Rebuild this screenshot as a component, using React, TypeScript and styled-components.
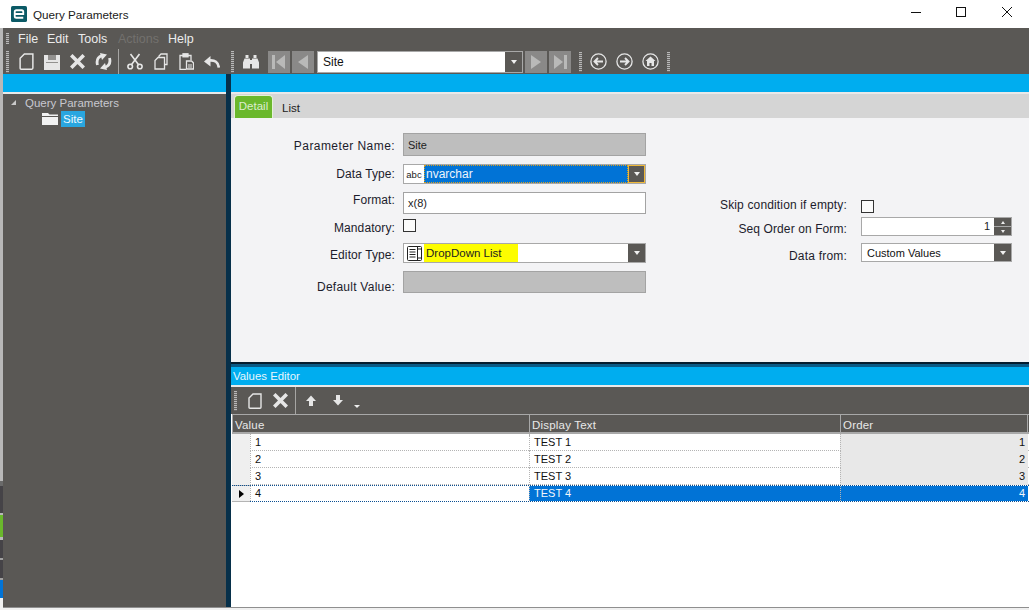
import React from 'react';
import styled, { createGlobalStyle } from 'styled-components';

const FONT = '"Liberation Sans", Arial, sans-serif';

const GlobalStyle = createGlobalStyle`
  html, body {
    margin: 0;
    padding: 0;
    background: #ffffff;
  }
  body {
    font-family: ${FONT};
    font-size: 12px;
    overflow: hidden;
  }
`;

const Page = styled.div`
  width: 1029px;
  height: 610px;
  display: flex;
  overflow: hidden;
`;

const Backdrop = styled.div`
  width: 3px;
  flex: none;
  display: flex;
  flex-direction: column;
`;

const Sliver = styled.div<{ $h: number; $c: string }>`
  height: ${p => p.$h}px;
  background: ${p => p.$c};
`;

const Window = styled.div`
  flex: 1;
  min-width: 0;
  display: flex;
  flex-direction: column;
`;

const TitleBar = styled.div`
  height: 28px;
  flex: none;
  display: flex;
  align-items: center;
  background: #ffffff;
  padding-left: 8px;
`;

const TitleText = styled.span`
  margin-left: 6px;
  font-size: 11.7px;
  color: #1a1a1a;
  flex: 1;
`;

const WindowButton = styled.div<{ $gap: number }>`
  width: 16px;
  height: 16px;
  margin-right: ${p => p.$gap}px;
  color: #111;
`;

const MenuBar = styled.div`
  height: 21px;
  flex: none;
  display: flex;
  align-items: center;
  background: #5a5855;
  padding-left: 3px;
`;

const Grip = styled.div<{ $h: number; $ml?: number }>`
  width: 3px;
  height: ${p => p.$h}px;
  margin-left: ${p => p.$ml ?? 0}px;
  flex: none;
  background: repeating-linear-gradient(to bottom, #b8b8b8 0 1px, #6a6866 1px 2px);
`;

const MenuItem = styled.span<{ $w: number; $off?: boolean }>`
  width: ${p => p.$w}px;
  flex: none;
  font-size: 12.5px;
  color: ${p => (p.$off ? '#73716e' : '#ececec')};
`;

const MenuItems = styled.div`
  display: flex;
  margin-left: 9px;
`;

const Toolbar = styled.div`
  height: 25px;
  flex: none;
  display: flex;
  align-items: center;
  background: #5a5855;
  padding-left: 3px;
  color: #e6e6e6;
`;

const ToolIcon = styled.div<{ $w: number; $ml: number }>`
  width: ${p => p.$w}px;
  height: 18px;
  margin-left: ${p => p.$ml}px;
  flex: none;
  display: flex;
  align-items: center;
  justify-content: center;
  svg {
    display: block;
  }
`;

const ToolSep = styled.div<{ $ml: number; $h: number }>`
  width: 1px;
  height: ${p => p.$h}px;
  margin-left: ${p => p.$ml}px;
  flex: none;
  background: #a6a5a3;
`;

const NavButton = styled.div<{ $ml: number }>`
  width: 22px;
  height: 22px;
  margin-left: ${p => p.$ml}px;
  flex: none;
  background: #8a8988;
  display: flex;
  align-items: center;
  justify-content: center;
  color: #b9b9b8;
`;

const Combo = styled.div<{ $w: number; $ml?: number; $h: number }>`
  width: ${p => p.$w}px;
  height: ${p => p.$h}px;
  margin-left: ${p => p.$ml ?? 0}px;
  flex: none;
  box-sizing: border-box;
  border: 1px solid #a8a8a8;
  background: #ffffff;
  display: flex;
  align-items: stretch;
  color: #111;
`;

const ComboText = styled.div<{ $size?: number; $pad?: number }>`
  flex: 1;
  min-width: 0;
  display: flex;
  align-items: center;
  padding-left: ${p => p.$pad ?? 5}px;
  font-size: ${p => p.$size ?? 12}px;
`;

const ComboArrow = styled.div<{ $w?: number; $focus?: boolean }>`
  width: ${p => p.$w ?? 17}px;
  flex: none;
  box-sizing: border-box;
  background: #5a5855;
  border: ${p => (p.$focus ? '1px solid #f0b93a' : 'none')};
  display: flex;
  align-items: center;
  justify-content: center;
  &::after {
    content: '';
    border-left: 3.5px solid transparent;
    border-right: 3.5px solid transparent;
    border-top: 4px solid #f0f0f0;
  }
`;

const Body = styled.div`
  flex: 1;
  min-height: 0;
  display: flex;
`;

const LeftPane = styled.div`
  width: 223px;
  flex: none;
  display: flex;
  flex-direction: column;
  background: #5a5855;
`;

const BlueBand = styled.div<{ $h: number }>`
  height: ${p => p.$h}px;
  flex: none;
  background: #00adef;
  color: #e6f6fd;
  font-size: 11.4px;
  display: flex;
  align-items: center;
  padding-left: 2px;
`;

const WhiteRule = styled.div<{ $h?: number }>`
  height: ${p => p.$h ?? 2}px;
  flex: none;
  background: #e9e9e9;
`;

const Tree = styled.div`
  padding: 1px 0 0 8px;
  color: #c8c8d0;
  font-size: 11.5px;
`;

const TreeRoot = styled.div`
  display: flex;
  align-items: center;
  height: 15px;
`;

const TreeToggle = styled.span`
  width: 0;
  height: 0;
  border-left: 5px solid transparent;
  border-bottom: 5px solid #c9c9c9;
  margin-right: 9px;
`;

const TreeLeaf = styled.div`
  display: flex;
  align-items: center;
  height: 16px;
  margin-top: 1px;
  padding-left: 31px;
`;

const TreeSelected = styled.span`
  margin-left: 3px;
  width: 24px;
  height: 16px;
  line-height: 16px;
  text-align: center;
  background: #29a6e0;
  color: #eef8fd;
  font-size: 11.5px;
`;

const Splitter = styled.div`
  width: 5px;
  flex: none;
  background: #07304a;
`;

const RightPane = styled.div`
  flex: 1;
  min-width: 0;
  display: flex;
  flex-direction: column;
  background: #ffffff;
`;

const TabBar = styled.div`
  height: 24px;
  flex: none;
  display: flex;
  align-items: flex-end;
  background: #d5d5d5;
  padding-left: 3px;
`;

const TabActive = styled.div`
  width: 39px;
  height: 23px;
  box-sizing: border-box;
  border: 1px solid #e4f2d6;
  border-bottom: none;
  border-radius: 4px 4px 0 0;
  background: #6ab82c;
  color: #dcecce;
  font-size: 11.5px;
  text-align: center;
  line-height: 20px;
`;

const Tab = styled.div`
  margin-left: 9px;
  height: 21px;
  line-height: 23px;
  font-size: 11.5px;
  color: #222;
`;

const FormArea = styled.div`
  height: 244px;
  flex: none;
  box-sizing: border-box;
  background: #f3f3f5;
  display: flex;
  padding-top: 15px;
`;

const FormColumn = styled.div<{ $w: number; $top?: number }>`
  width: ${p => p.$w}px;
  flex: none;
  padding-top: ${p => p.$top ?? 0}px;
`;

const FormRow = styled.div<{ $h: number; $mt?: number; $label: number }>`
  height: ${p => p.$h}px;
  margin-top: ${p => p.$mt ?? 0}px;
  display: grid;
  grid-template-columns: ${p => p.$label}px 1fr;
  column-gap: 8px;
  align-items: center;
`;

const FieldLabel = styled.label<{ $dy?: number; $ls?: number }>`
  text-align: right;
  white-space: nowrap;
  font-size: 12px;
  letter-spacing: ${p => p.$ls ?? 0.1}px;
  color: #1c1c2c;
  transform: translateY(${p => p.$dy ?? 0}px);
`;

const TextBox = styled.div<{ $w: number; $grey?: boolean }>`
  width: ${p => p.$w}px;
  height: 100%;
  box-sizing: border-box;
  border: 1px solid #a3a3a3;
  background: ${p => (p.$grey ? '#bebebe' : '#ffffff')};
  padding-left: 4px;
  display: flex;
  align-items: center;
  font-size: 11px;
  color: #222;
`;

const Check = styled.div<{ $ml?: number }>`
  width: 13px;
  height: 13px;
  margin-left: ${p => p.$ml ?? 0}px;
  box-sizing: border-box;
  border: 1px solid #333;
  background: #fbfbfb;
`;

const SelectedText = styled.div`
  flex: 1;
  background: #0173d6;
  outline: 1px dotted #d8a020;
  outline-offset: -1px;
  color: #eef4fb;
  font-size: 12px;
  display: flex;
  align-items: center;
  padding-left: 2px;
`;

const ComboGlyph = styled.div`
  width: 20px;
  flex: none;
  display: flex;
  align-items: center;
  justify-content: center;
  font-size: 9.5px;
  color: #222;
`;

const Highlight = styled.span`
  background: #fdfd00;
  font-size: 11.5px;
  padding: 3px 17px 3px 2px;
  color: #222;
`;

const Spinner = styled.div`
  width: 17px;
  flex: none;
  display: flex;
  flex-direction: column;
  gap: 1px;
  background: #a8a8a8;
`;

const SpinPart = styled.div<{ $up?: boolean }>`
  flex: 1;
  background: #5a5855;
  display: flex;
  align-items: center;
  justify-content: center;
  &::after {
    content: '';
    border-left: 2.5px solid transparent;
    border-right: 2.5px solid transparent;
    ${p => (p.$up ? 'border-bottom: 3px solid #eee;' : 'border-top: 3px solid #eee;')}
  }
`;

const SpinValue = styled.div`
  flex: 1;
  text-align: right;
  padding-right: 4px;
  font-size: 11px;
  line-height: 17px;
  color: #222;
`;

const PaneDivider = styled.div`
  height: 5px;
  flex: none;
  background: linear-gradient(to bottom, #041c2e 0 2px, #0a5a86 2px 100%);
`;

const GridToolbar = styled(Toolbar)`
  height: 27px;
  padding-left: 3px;
`;

const MoreArrow = styled.div`
  margin: 12px 0 0 11px;
  border-left: 3px solid transparent;
  border-right: 3px solid transparent;
  border-top: 3px solid #eee;
`;

const DataGrid = styled.div`
  flex: 1;
  min-height: 0;
  margin-left: 1px;
  background: #ffffff;
  display: flex;
  flex-direction: column;
`;

const COLUMNS = '18px 279px 311px 188px';

const HeaderRow = styled.div`
  height: 20px;
  flex: none;
  display: grid;
  grid-template-columns: 297px 311px 188px;
  box-sizing: border-box;
  border-top: 1px solid #a8a8a8;
  border-bottom: 2px solid #a8a8a8;
  background: #5a5855;
`;

const HeaderCell = styled.div`
  border-left: 1px solid #a8a8a8;
  padding-left: 2px;
  font-size: 11.5px;
  letter-spacing: 0.2px;
  line-height: 21px;
  color: #e8e8e8;
  &:last-child {
    border-right: 1px solid #a8a8a8;
  }
`;

const DataRow = styled.div<{ $on?: boolean }>`
  height: 17px;
  flex: none;
  box-sizing: border-box;
  display: grid;
  grid-template-columns: ${COLUMNS};
  border-bottom: 1px ${p => (p.$on ? 'dotted #0a4f92' : 'dotted #b4b4b4')};
  border-top: ${p => (p.$on ? '1px dotted #0a4f92' : 'none')};
  line-height: ${p => (p.$on ? 15 : 17)}px;
  font-size: 11px;
  color: #111;
`;

const RowMarker = styled.div`
  background: #efefef;
  border-bottom: 1px solid #b4b4b4;
  margin-bottom: -1px;
  display: flex;
  align-items: center;
  justify-content: center;
  &[data-current='true']::after {
    content: '';
    border-top: 4px solid transparent;
    border-bottom: 4px solid transparent;
    border-left: 5px solid #000;
  }
`;

const DataCell = styled.div<{ $tone?: 'grey' | 'blue'; $right?: boolean }>`
  box-sizing: border-box;
  border-left: 1px dotted #b4b4b4;
  padding: 0 ${p => (p.$right ? 3 : 0)}px 0 ${p => (p.$right ? 0 : 4)}px;
  text-align: ${p => (p.$right ? 'right' : 'left')};
  background: ${p => (p.$tone === 'blue' ? '#0173d6' : p.$tone === 'grey' ? '#e8e8e8' : 'transparent')};
  color: ${p => (p.$tone === 'blue' ? '#f2f7fc' : '#111')};
`;

const BottomEdge = styled.div`
  height: 3px;
  flex: none;
  background: #f0f0f0;
  border-top: 1px solid #8f8f8f;
  box-sizing: border-box;
`;

const AppLogo = () => (
  <svg width="16" height="16" viewBox="0 0 15 15">
    <rect width="15" height="15" rx="1.5" fill="#0b5a66" />
    <path d="M3.5 7.5h8V5.5q0-1.5-1.5-1.5H5q-1.5 0-1.5 1.5v4q0 1.5 1.5 1.5h6.5" fill="none" stroke="#fff" strokeWidth="1.7" />
  </svg>
);

const NewDocIcon = ({ size = 15 }: { size?: number }) => (
  <svg width={size} height={size + 2} viewBox="0 0 14 16" fill="none" stroke="currentColor" strokeWidth="1.4">
    <path d="M5 1h8v13.2q0 1-1 1H2q-1 0-1-1V5z" />
  </svg>
);

const SaveIcon = () => (
  <svg width="16" height="16" viewBox="0 0 16 16">
    <path d="M0 1h16v15H0z" fill="currentColor" />
    <path d="M4 1h8v5H4z" fill="#5a5855" opacity=".6" />
    <path d="M2 8h12v1H2z" fill="#5a5855" opacity=".6" />
  </svg>
);

const CrossIcon = ({ size = 15 }: { size?: number }) => (
  <svg width={size} height={size} viewBox="0 0 15 15" stroke="currentColor" strokeWidth="3.6" strokeLinecap="square">
    <path d="M2.5 2.5l10 10M12.5 2.5l-10 10" />
  </svg>
);

const RefreshIcon = () => (
  <svg width="17" height="17" viewBox="0 0 17 17" fill="none" stroke="currentColor" strokeWidth="2.8">
    <path d="M2.5 12Q0.6 5 7 2.5" />
    <path d="M14.5 5Q16.4 12 10 14.5" />
    <path d="M5 0l7 1.5L7 7zM12 17L5 15.5 10 10z" fill="currentColor" stroke="none" />
  </svg>
);

const ScissorsIcon = () => (
  <svg width="16" height="17" viewBox="0 0 16 17" fill="none" stroke="currentColor" strokeWidth="1.6">
    <circle cx="3.2" cy="13.5" r="2.3" />
    <circle cx="12.8" cy="13.5" r="2.3" />
    <path d="M4.6 11.6L12.5 1M11.4 11.6L3.5 1" />
  </svg>
);

const CopyIcon = () => (
  <svg width="14" height="17" viewBox="0 0 14 17" fill="none" stroke="currentColor" strokeWidth="1.3">
    <path d="M5 4.5V3l2-2h6v10.5h-2.5" />
    <path d="M4 4.5h6.5v11.5H1V7.5z" fill="#5a5855" />
  </svg>
);

const PasteIcon = () => (
  <svg width="15" height="17" viewBox="0 0 15 17" fill="none" stroke="currentColor" strokeWidth="1.3">
    <path d="M4 2.5H1v14h6" />
    <path d="M9 2.5h3V7" />
    <rect x="4" y="0.8" width="5" height="3" fill="currentColor" />
    <path d="M7.5 8h5l2 2v6h-7z" />
    <path d="M9 12h4M9 14h4" strokeWidth="1" />
  </svg>
);

const UndoIcon = () => (
  <svg width="16" height="12" viewBox="0 0 16 12" fill="none" stroke="currentColor" strokeWidth="2.6">
    <path d="M14.8 11.5Q14 3.5 5 4.5" />
    <path d="M0 5.5L6.5 0V10.5z" fill="currentColor" stroke="none" />
  </svg>
);

const BinocularsIcon = () => (
  <svg width="16" height="14" viewBox="0 0 16 14" fill="currentColor">
    <path d="M2.5 0h3v3h-3zM10.5 0h3v3h-3z" />
    <path d="M1.5 3.5h5.5v10H0v-6zM9 3.5h5.5L16 7.5v6H9z" />
    <path d="M7 5h2v4H7z" />
  </svg>
);

const NavGlyph = ({ dir, bar }: { dir: 'left' | 'right'; bar?: boolean }) => (
  <svg width="14" height="14" viewBox="0 0 14 14" fill="currentColor">
    {dir === 'left' ? (
      <>
        {bar && <path d="M0 0h3v14H0z" />}
        <path d={bar ? 'M13 0v14L4 7z' : 'M12 0v14L2 7z'} />
      </>
    ) : (
      <>
        <path d={bar ? 'M1 0v14l9-7z' : 'M2 0v14l10-7z'} />
        {bar && <path d="M11 0h3v14h-3z" />}
      </>
    )}
  </svg>
);

const CircleNav = ({ dir }: { dir: 'left' | 'right' | 'home' }) => (
  <svg width="17" height="17" viewBox="0 0 17 17" fill="none" stroke="currentColor" strokeWidth="1.3">
    <circle cx="8.5" cy="8.5" r="7.6" />
    {dir === 'left' && <path d="M13 8.5H5M8 5L4.5 8.5 8 12" strokeWidth="1.9" />}
    {dir === 'right' && <path d="M4 8.5h8M9 5l3.5 3.5L9 12" strokeWidth="1.9" />}
    {dir === 'home' && <path d="M8.5 3.5L3.5 8h1.5v5h2.5V10h2v3H12V8h1.5z" fill="currentColor" stroke="none" />}
  </svg>
);

const ArrowIcon = ({ up }: { up?: boolean }) => (
  <svg width="10" height="11" viewBox="0 0 10 11" fill="currentColor">
    <path d={up ? 'M5 0.5L10 6H7v5H3V6H0z' : 'M5 10.5L10 5H7V0H3v5H0z'} />
  </svg>
);

const ListEditorIcon = () => (
  <svg width="15" height="15" viewBox="0 0 15 15" fill="none" stroke="#222" strokeWidth="1">
    <rect x="0.5" y="0.5" width="14" height="14" rx="1" />
    <path d="M10.5 0.5v14M2.5 3.5h6M2.5 6h6M2.5 8.5h6M2.5 11h6M11 3h3M11 12h3" />
  </svg>
);

const FolderIcon = () => (
  <svg width="16" height="12" viewBox="0 0 16 12">
    <path d="M0 0h6l1.5 1.5H16V3H0z" fill="#f2f2f2" />
    <path d="M0 4h16v8H0z" fill="#f2f2f2" />
  </svg>
);

const backdrop: [number, string][] = [
  [28, '#ffffff'],
  [453, '#b8b8b8'],
  [5, '#6a6a6a'],
  [27, '#454347'],
  [2, '#b8b8b8'],
  [22, '#6ab82c'],
  [3, '#b8b8b8'],
  [18, '#454347'],
  [2, '#a0a0a0'],
  [18, '#454347'],
  [2, '#a0a0a0'],
  [18, '#0173d6'],
  [12, '#f0f0f0']
];

const values = [
  { value: '1', text: 'TEST 1', order: 1 },
  { value: '2', text: 'TEST 2', order: 2 },
  { value: '3', text: 'TEST 3', order: 3 },
  { value: '4', text: 'TEST 4', order: 4 }
];

const App: React.FC = () => (
  <Page>
    <GlobalStyle />
    <Backdrop>
      {backdrop.map(([h, c], i) => (
        <Sliver key={i} $h={h} $c={c} />
      ))}
    </Backdrop>
    <Window>
      <TitleBar>
        <AppLogo />
        <TitleText>Query Parameters</TitleText>
        <WindowButton $gap={29}>
          <svg width="16" height="16" viewBox="0 0 16 16" stroke="currentColor">
            <path d="M3 6.5h10" />
          </svg>
        </WindowButton>
        <WindowButton $gap={30}>
          <svg width="16" height="16" viewBox="0 0 16 16" fill="none" stroke="currentColor">
            <rect x="3.5" y="1.5" width="9" height="9" />
          </svg>
        </WindowButton>
        <WindowButton $gap={14}>
          <svg width="16" height="16" viewBox="0 0 16 16" stroke="currentColor">
            <path d="M3 1l10 10M13 1L3 11" />
          </svg>
        </WindowButton>
      </TitleBar>

      <MenuBar>
        <Grip $h={11} />
        <MenuItems>
          <MenuItem $w={29}>File</MenuItem>
          <MenuItem $w={31}>Edit</MenuItem>
          <MenuItem $w={40}>Tools</MenuItem>
          <MenuItem $w={50} $off>Actions</MenuItem>
          <MenuItem $w={40}>Help</MenuItem>
        </MenuItems>
      </MenuBar>

      <Toolbar>
        <Grip $h={22} />
        <ToolIcon $w={15} $ml={10}><NewDocIcon /></ToolIcon>
        <ToolIcon $w={16} $ml={10}><SaveIcon /></ToolIcon>
        <ToolIcon $w={15} $ml={10}><CrossIcon /></ToolIcon>
        <ToolIcon $w={17} $ml={10}><RefreshIcon /></ToolIcon>
        <ToolSep $ml={6} $h={25} />
        <ToolIcon $w={16} $ml={8}><ScissorsIcon /></ToolIcon>
        <ToolIcon $w={14} $ml={11}><CopyIcon /></ToolIcon>
        <ToolIcon $w={15} $ml={11}><PasteIcon /></ToolIcon>
        <ToolIcon $w={16} $ml={10}><UndoIcon /></ToolIcon>
        <Grip $h={22} $ml={11} />
        <ToolIcon $w={16} $ml={9}><BinocularsIcon /></ToolIcon>
        <NavButton $ml={9}><NavGlyph dir="left" bar /></NavButton>
        <NavButton $ml={2}><NavGlyph dir="left" /></NavButton>
        <Combo $w={206} $ml={3} $h={22}>
          <ComboText>Site</ComboText>
          <ComboArrow />
        </Combo>
        <NavButton $ml={2}><NavGlyph dir="right" /></NavButton>
        <NavButton $ml={2}><NavGlyph dir="right" bar /></NavButton>
        <Grip $h={20} $ml={8} />
        <ToolIcon $w={17} $ml={8}><CircleNav dir="left" /></ToolIcon>
        <ToolIcon $w={17} $ml={9}><CircleNav dir="right" /></ToolIcon>
        <ToolIcon $w={17} $ml={9}><CircleNav dir="home" /></ToolIcon>
        <Grip $h={20} $ml={8} />
      </Toolbar>

      <Body>
        <LeftPane>
          <BlueBand $h={18} />
          <WhiteRule />
          <Tree>
            <TreeRoot>
              <TreeToggle />
              Query Parameters
            </TreeRoot>
            <TreeLeaf>
              <FolderIcon />
              <TreeSelected>Site</TreeSelected>
            </TreeLeaf>
          </Tree>
        </LeftPane>
        <Splitter />
        <RightPane>
          <BlueBand $h={18} />
          <WhiteRule />
          <TabBar>
            <TabActive>Detail</TabActive>
            <Tab>List</Tab>
          </TabBar>

          <FormArea>
            <FormColumn $w={475}>
              <FormRow $h={23} $label={164}>
                <FieldLabel $dy={1} $ls={0.43}>Parameter Name:</FieldLabel>
                <TextBox $w={243} $grey>Site</TextBox>
              </FormRow>
              <FormRow $h={20} $mt={8} $label={164}>
                <FieldLabel>Data Type:</FieldLabel>
                <Combo $w={243} $h={20}>
                  <ComboGlyph>abc</ComboGlyph>
                  <SelectedText>nvarchar</SelectedText>
                  <ComboArrow $focus />
                </Combo>
              </FormRow>
              <FormRow $h={22} $mt={8} $label={164}>
                <FieldLabel $dy={-3}>Format:</FieldLabel>
                <TextBox $w={243}>x(8)</TextBox>
              </FormRow>
              <FormRow $h={13} $mt={4} $label={164}>
                <FieldLabel $dy={3}>Mandatory:</FieldLabel>
                <Check />
              </FormRow>
              <FormRow $h={20} $mt={12} $label={164}>
                <FieldLabel $dy={2}>Editor Type:</FieldLabel>
                <Combo $w={243} $h={20}>
                  <ComboGlyph><ListEditorIcon /></ComboGlyph>
                  <ComboText $size={11.5} $pad={0}><Highlight>DropDown List</Highlight></ComboText>
                  <ComboArrow />
                </Combo>
              </FormRow>
              <FormRow $h={22} $mt={8} $label={164}>
                <FieldLabel $dy={5} $ls={0.25}>Default Value:</FieldLabel>
                <TextBox $w={243} $grey />
              </FormRow>
            </FormColumn>
            <FormColumn $w={320} $top={66}>
              <FormRow $h={13} $label={141}>
                <FieldLabel $dy={-1} $ls={0.15}>Skip condition if empty:</FieldLabel>
                <Check $ml={6} />
              </FormRow>
              <FormRow $h={19} $mt={5} $label={141}>
                <FieldLabel $dy={2}>Seq Order on Form:</FieldLabel>
                <Combo $w={151} $h={19} $ml={6}>
                  <SpinValue>1</SpinValue>
                  <Spinner>
                    <SpinPart $up />
                    <SpinPart />
                  </Spinner>
                </Combo>
              </FormRow>
              <FormRow $h={19} $mt={7} $label={141}>
                <FieldLabel $dy={3} $ls={0.2}>Data from:</FieldLabel>
                <Combo $w={151} $h={19} $ml={6}>
                  <ComboText $size={11}>Custom Values</ComboText>
                  <ComboArrow />
                </Combo>
              </FormRow>
            </FormColumn>
          </FormArea>

          <PaneDivider />
          <BlueBand $h={18}>Values Editor</BlueBand>
          <WhiteRule />
          <GridToolbar>
            <Grip $h={20} />
            <ToolIcon $w={14} $ml={11}><NewDocIcon size={14} /></ToolIcon>
            <ToolIcon $w={15} $ml={11}><CrossIcon /></ToolIcon>
            <ToolSep $ml={7} $h={27} />
            <ToolIcon $w={10} $ml={10}><ArrowIcon up /></ToolIcon>
            <ToolIcon $w={10} $ml={17}><ArrowIcon /></ToolIcon>
            <MoreArrow />
          </GridToolbar>

          <DataGrid>
            <HeaderRow>
              <HeaderCell>Value</HeaderCell>
              <HeaderCell>Display Text</HeaderCell>
              <HeaderCell>Order</HeaderCell>
            </HeaderRow>
            {values.map((row, i) => {
              const current = i === values.length - 1;
              return (
                <DataRow key={row.value} $on={current}>
                  <RowMarker data-current={current} />
                  <DataCell>{row.value}</DataCell>
                  <DataCell $tone={current ? 'blue' : undefined}>{row.text}</DataCell>
                  <DataCell $right $tone={current ? 'blue' : 'grey'}>{row.order}</DataCell>
                </DataRow>
              );
            })}
          </DataGrid>
        </RightPane>
      </Body>
      <BottomEdge />
    </Window>
  </Page>
);

export default App;
